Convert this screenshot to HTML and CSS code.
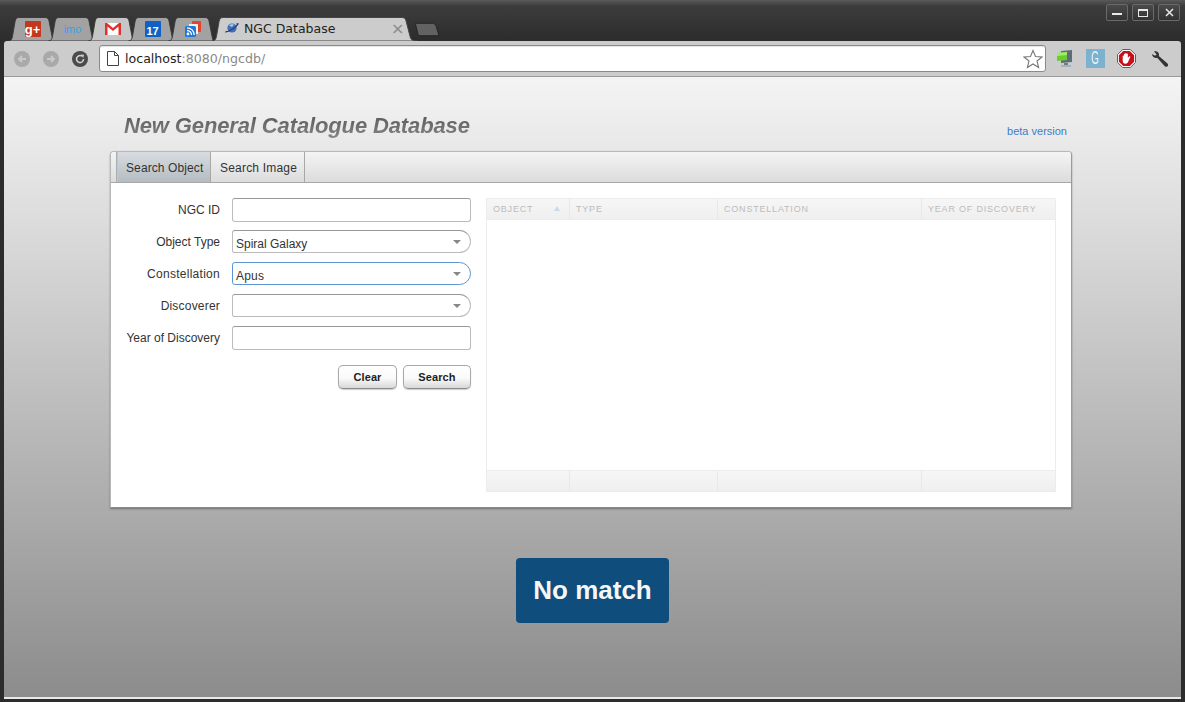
FILE: index.html
```html
<!DOCTYPE html>
<html lang="en">
<head>
<meta charset="utf-8">
<title>NGC Database</title>
<link rel="stylesheet" href="styles.css">
</head>
<body>
<div class="window">
  <header class="tabstrip">
    <div class="tabs">
      <div class="tab pinned">
        <svg class="tab-bg" viewBox="0 0 47 25" preserveAspectRatio="none"><path class="t-in" d="M0.500 25C3 25 4 23 4.500 20L7 5C7.500 2 8.500 0.500 11 0.500H37C39.500 0.500 40.500 2 41 4L44 20C44.500 23 45 25 46.500 25Z"/></svg>
        <span class="fav gplus">g+</span>
      </div>
      <div class="tab pinned">
        <svg class="tab-bg" viewBox="0 0 47 25" preserveAspectRatio="none"><path class="t-in" d="M0.500 25C3 25 4 23 4.500 20L7 5C7.500 2 8.500 0.500 11 0.500H37C39.500 0.500 40.500 2 41 4L44 20C44.500 23 45 25 46.500 25Z"/></svg>
        <span class="fav imo">imo</span>
      </div>
      <div class="tab pinned">
        <svg class="tab-bg" viewBox="0 0 47 25" preserveAspectRatio="none"><path class="t-glow" d="M0.500 25C3 25 4 23 4.500 20L7 5C7.500 2 8.500 0.500 11 0.500H37C39.500 0.500 40.500 2 41 4L44 20C44.500 23 45 25 46.500 25Z"/></svg>
        <svg class="fav-svg" viewBox="0 0 16 12"><rect width="16" height="12" fill="#fff"/><path d="M0 0H2L8 5L14 0H16V12H13.500V3.500L8 8L2.500 3.500V12H0Z" fill="#e0322c"/></svg>
      </div>
      <div class="tab pinned">
        <svg class="tab-bg" viewBox="0 0 47 25" preserveAspectRatio="none"><path class="t-in" d="M0.500 25C3 25 4 23 4.500 20L7 5C7.500 2 8.500 0.500 11 0.500H37C39.500 0.500 40.500 2 41 4L44 20C44.500 23 45 25 46.500 25Z"/></svg>
        <span class="fav cal">17</span>
      </div>
      <div class="tab pinned">
        <svg class="tab-bg" viewBox="0 0 47 25" preserveAspectRatio="none"><path class="t-in" d="M0.500 25C3 25 4 23 4.500 20L7 5C7.500 2 8.500 0.500 11 0.500H37C39.500 0.500 40.500 2 41 4L44 20C44.500 23 45 25 46.500 25Z"/></svg>
        <svg class="fav-svg reader" viewBox="0 0 16 16"><rect x="7" y="0" width="9" height="11" rx="1" fill="#e0432f"/><rect x="4" y="3" width="9" height="10" fill="#f3efe6"/><rect x="0" y="5" width="11" height="11" rx="1.500" fill="#1d78d6"/><circle cx="3" cy="13" r="1.400" fill="#fff"/><path d="M2 9.500A4.500 4.500 0 0 1 6.500 14M2 6.800A7.200 7.200 0 0 1 9.200 14" fill="none" stroke="#fff" stroke-width="1.300"/></svg>
      </div>
      <div class="tab active">
        <svg class="tab-bg" viewBox="0 0 205 25" preserveAspectRatio="none"><path class="t-ac" d="M0 25C3 25 4 23 4.500 20L7 5C7.500 2 8.500 0.500 11 0.500H190C192.500 0.500 193.500 2 194 4L198 20C198.500 23 200 25 205 25Z"/></svg>
        <svg class="planet" viewBox="0 0 16 14"><circle cx="8" cy="7" r="4.600" fill="#3f6fb8"/><path d="M5 4.500A4 4 0 0 1 10 3.500L8 6Z" fill="#a9c4ec"/><path d="M1 11.500C4 12 13 7 15 2.500C13 2 12.300 2.300 12 2.800C13 3 13 3.500 11 5.500C8 8 4 10 2.500 10C1.500 10 1 11 1 11.500Z" fill="#1f3f7a"/></svg>
        <span class="tab-title">NGC Database</span>
        <span class="tab-close">×</span>
      </div>
      <svg class="newtab" viewBox="0 0 26 15"><path d="M1 1H18C20 1 21 2 22 4L25 14H5C4 14 3.500 13.500 3 12L0.500 2C0.300 1.300 0.500 1 1 1Z" fill="#626262" stroke="#232323"/></svg>
    </div>
    <div class="winbtns">
      <button class="winbtn"><span class="w-min"></span></button>
      <button class="winbtn"><span class="w-max"></span></button>
      <button class="winbtn"><svg class="w-x" viewBox="0 0 9 9"><path d="M1 1L8 8M8 1L1 8" stroke="#e8e8e8" stroke-width="1.500" fill="none"/></svg></button>
    </div>
  </header>

  <nav class="toolbar">
    <svg class="navbtn" viewBox="0 0 16 16"><circle cx="8" cy="8" r="8" fill="#a9a9a9"/><path d="M12 8H5M8 5L5 8L8 11" stroke="#c9c9c9" stroke-width="1.800" fill="none"/></svg>
    <svg class="navbtn" viewBox="0 0 16 16"><circle cx="8" cy="8" r="8" fill="#a9a9a9"/><path d="M4 8H11M8 5L11 8L8 11" stroke="#c9c9c9" stroke-width="1.800" fill="none"/></svg>
    <svg class="navbtn" viewBox="0 0 16 16"><circle cx="8" cy="8" r="8" fill="#4a4a4a"/><path d="M11.500 8A3.500 3.500 0 1 1 10 5.200" stroke="#d0d0d0" stroke-width="1.600" fill="none"/><path d="M8.800 3.500L12 3.800L11.300 7Z" fill="#d0d0d0"/></svg>
    <div class="omnibox">
      <svg class="pageicon" viewBox="0 0 12 15"><path d="M0.500 0.500H7.500L11.500 4.500V14.500H0.500Z" fill="#fff" stroke="#444"/><path d="M7.500 0.500V4.500H11.500" fill="none" stroke="#444"/></svg>
      <span class="url"><span class="host">localhost</span>:8080/ngcdb/</span>
      <svg class="star" viewBox="0 0 20 20"><path d="M10 1.500L12.500 7.500L19 8L14 12L15.600 18.500L10 15L4.400 18.500L6 12L1 8L7.500 7.500Z" fill="#fff" stroke="#777" stroke-width="1.100"/></svg>
    </div>
    <div class="exts">
      <svg class="ext" viewBox="0 0 17 19"><path d="M5 2L16 1V13L5 14Z" fill="#5d6d78"/><path d="M1 4L11 3V11L1 12Z" fill="#68cf28"/><path d="M1 4L11 3V6L1 7Z" fill="#a4ea6c"/><rect x="8" y="14" width="4" height="2" fill="#6f7f8a"/><rect x="5" y="16" width="10" height="2" fill="#a4b1b9"/></svg>
      <span class="ext gee"><span class="gee-letter">G</span></span>
      <svg class="ext" viewBox="0 0 20 20"><path d="M6 0.500H14L19.500 6V14L14 19.500H6L0.500 14V6Z" fill="#fff" stroke="#555"/><path d="M6.500 2H13.500L18 6.500V13.500L13.500 18H6.500L2 13.500V6.500Z" fill="#c8101a"/><path d="M6 12V7.500C6 6.700 7.300 6.700 7.300 7.500V5.500C7.300 4.700 8.600 4.700 8.600 5.500V4.800C8.600 4 10 4 10 4.800V5.300C10 4.500 11.400 4.500 11.400 5.300V9.500L12.700 8C13.400 7.400 14.300 8 13.800 8.800L12 13C11.500 14.600 10.500 15.500 9 15.500C7 15.500 6 14.300 6 12Z" fill="#fff"/></svg>
      <svg class="ext wrench" viewBox="0 0 18 18"><path d="M3 1.500C5.500 0.500 8 2 8 4.500C8 5 8 5.500 7.800 6L16.500 13.500C17.300 14.300 17.300 15.500 16.500 16.300C15.700 17.100 14.500 17 13.800 16.300L6.200 7.800C4 8.500 1.200 7 1 4L4 5.800L5.700 4.500Z" fill="#333"/></svg>
    </div>
  </nav>

  <main class="page">
    <div class="app">
      <div class="app-head">
        <h1 class="app-title">New General Catalogue Database</h1>
        <a class="beta">beta version</a>
      </div>
      <section class="card">
        <div class="card-tabs">
          <div class="card-tab selected">Search Object</div>
          <div class="card-tab second">Search Image</div>
        </div>
        <div class="card-body">
          <form class="form">
            <div class="row row-input"><label>NGC ID</label><span class="field"></span></div>
            <div class="row row-select"><label>Object Type</label><span class="field combo">Spiral Galaxy<i class="caret"></i></span></div>
            <div class="row row-select"><label class="wide">Constellation</label><span class="field combo focus">Apus<i class="caret"></i></span></div>
            <div class="row row-select"><label class="mid">Discoverer</label><span class="field combo"><i class="caret"></i></span></div>
            <div class="row row-input"><label>Year of Discovery</label><span class="field"></span></div>
            <div class="actions">
              <span class="btn btn-clear">Clear</span>
              <span class="btn btn-search">Search</span>
            </div>
          </form>
          <div class="grid">
            <div class="grid-row grid-head">
              <div class="cell c1">OBJECT<i class="sort"></i></div>
              <div class="cell c2">TYPE</div>
              <div class="cell c3">CONSTELLATION</div>
              <div class="cell c4">YEAR OF DISCOVERY</div>
            </div>
            <div class="grid-empty"></div>
            <div class="grid-row grid-foot">
              <div class="cell c1"></div>
              <div class="cell c2"></div>
              <div class="cell c3"></div>
              <div class="cell c4"></div>
            </div>
          </div>
        </div>
      </section>
      <div class="notice-wrap"><div class="notice">No match</div></div>
    </div>
  </main>
</div>
</body>
</html>
```

FILE: styles.css
```css
* { box-sizing: border-box; }
html, body { margin: 0; height: 100%; overflow: hidden; }
body { font-family: "Liberation Sans", Arial, sans-serif; background: #2c2c2c; }

.window { height: 702px; display: flex; flex-direction: column; background: linear-gradient(#5a5a5a 0, #3c3c3c 6px, #2c2c2c 41px); }

/* Tab strip */
.tabstrip { height: 41px; display: flex; justify-content: space-between; padding: 4px 5px 0 8px; flex: none; }
.tabs { display: flex; align-items: flex-end; height: 37px; }
.tab { position: relative; height: 24px; display: flex; align-items: center; flex: none; }
.pinned { width: 47px; margin-right: -7px; justify-content: center; padding-left: 2px; }
.active { width: 205px; margin-left: 4px; padding: 0 0 2px 12px; }
.tab-bg { position: absolute; left: 0; top: 0; width: 100%; height: 100%; }
.t-in { fill: #a2a2a2; stroke: #3a3a3a; }
.t-glow { fill: #c6c6c6; stroke: #3a3a3a; }
.t-ac { fill: #cccccc; stroke: #444; }
.fav, .fav-svg, .planet, .tab-title, .tab-close { position: relative; }
.fav { width: 16px; height: 16px; display: flex; align-items: center; justify-content: center; }
.fav-svg { width: 16px; height: 12px; }
.fav-svg.reader { height: 16px; }
.gplus { background: #c4371f; color: #fff; font: bold 13px "Liberation Sans", sans-serif; border-radius: 1px; }
.imo { color: #3b9fe8; font: 11px "Liberation Sans", sans-serif; }
.cal { background: #0f62c4; color: #fff; font: bold 11px "Liberation Sans", sans-serif; padding-top: 3px; border-radius: 1px; }
.planet { width: 16px; height: 14px; flex: none; }
.tab-title { font: 12.500px "DejaVu Sans", sans-serif; color: #222; margin-left: 4px; }
.tab-close { position: absolute; left: 179px; color: #8a8a8a; font: 16px "DejaVu Sans", sans-serif; line-height: 23px; top: 0; }
.newtab { width: 25px; height: 15px; flex: none; margin-left: -2px; margin-bottom: 4px; }

.winbtns { display: flex; gap: 4px; height: 17px; }
.winbtn { width: 22px; height: 17px; padding: 0; border: 1px solid #6a6a6a; border-radius: 2px; background: linear-gradient(#4a4a4a, #333); display: flex; align-items: center; justify-content: center; }
.w-min { width: 10px; height: 2px; background: #e8e8e8; margin-top: 3px; }
.w-max { width: 10px; height: 8px; border: 1px solid #e8e8e8; border-top-width: 2px; }
.w-x { width: 9px; height: 9px; }

/* Toolbar */
.toolbar { height: 36px; margin: 0 4px 0 4px; background: #cccccc; border-radius: 3px 3px 0 0; flex: none; display: flex; align-items: center; padding: 0 0 0 10px; border-bottom: 1px solid #9a9a9a; }
.navbtn { width: 16px; height: 16px; margin-right: 13px; flex: none; }
.omnibox { width: 947px; height: 27px; margin-left: -2px; background: #fff; border: 1px solid #8a8a8a; border-radius: 3px; display: flex; align-items: center; padding: 0 2px 0 7px; box-shadow: inset 0 1px 1px #e4e4e4; }
.pageicon { width: 12px; height: 15px; flex: none; }
.url { font: 12.600px "DejaVu Sans", sans-serif; color: #888; margin-left: 6px; flex: 1; }
.host { color: #222; }
.star { width: 20px; height: 20px; flex: none; }
.exts { display: flex; align-items: center; gap: 12px; margin-left: 9px; }
.ext { width: 19px; height: 19px; flex: none; }
.wrench { margin-left: 3px; width: 18px; height: 18px; }
.gee { background: #7bb2cf; display: flex; align-items: center; justify-content: center; overflow: hidden; }
.gee-letter { color: #f2f6f8; font: 18px "Liberation Sans", sans-serif; transform: scaleX(0.55); }

/* Page */
.page { flex: 1; margin: 0 4px 3px; background: linear-gradient(#f4f4f4, #8c8c8c); border-bottom: 2px solid #e8e8e8; min-height: 0; }
.app { width: 962px; margin-left: 106px; }
.app-head { height: 74px; display: flex; justify-content: space-between; align-items: flex-end; padding: 0 5px 12px 14px; }
.app-title { margin: 0; font: italic bold 22px/26px "Liberation Sans", sans-serif; letter-spacing: -0.130px; background: linear-gradient(#555, #888); -webkit-background-clip: text; background-clip: text; color: transparent; }
.beta { font-size: 11px; line-height: 14px; color: #3d7cc9; margin-bottom: 1px; }

.card { height: 357px; border: 1px solid #b8b8b8; border-bottom-color: #8a8a8a; border-right-color: #9a9a9a; border-radius: 4px 4px 0 0; background: #fff; box-shadow: 0 1px 2px rgba(0,0,0,.35); display: flex; flex-direction: column; }
.card-tabs { height: 31px; flex: none; display: flex; padding-left: 5px; border-bottom: 1px solid #a8a8a8; border-radius: 3px 3px 0 0; background: linear-gradient(#f4f4f4, #dcdcdc); }
.card-tab { font-size: 12px; color: #333; line-height: 32px; padding: 0 0 0 9px; border-right: 1px solid #a8a8a8; }
.card-tab.selected { width: 95px; letter-spacing: 0.1px; background: linear-gradient(#d8dce0, #b4bcc2); border-left: 1px solid #a8b0b6; box-shadow: inset 1px 0 0 #c0c6ca; }
.card-tab.second { width: 94px; letter-spacing: 0.2px; }
.card-body { flex: 1; display: flex; padding: 15px 15px 15px 0; }

.form { width: 360px; margin-right: 15px; flex: none; }
.row { display: flex; align-items: center; height: 24px; margin-bottom: 8px; }
.row label { width: 109px; text-align: right; font-size: 12px; color: #333; margin-right: 12px; flex: none; }
.row label.wide { letter-spacing: 0.270px; }
.row label.mid { letter-spacing: 0.200px; }
.field { width: 239px; height: 24px; border: 1px solid #bcbcbc; border-top-color: #999; border-radius: 3px; background: #fff; display: block; position: relative; }
.combo { height: 23px; border-radius: 3px 12px 12px 3px; font-size: 12px; color: #333; line-height: 27px; padding-left: 3px; }
.row-select .field { margin-bottom: 1px; }
.focus { border-color: #5b96d2; letter-spacing: 0.200px; }
.caret { position: absolute; right: 9px; top: 9px; border: 4px solid transparent; border-top: 4px solid #888; border-bottom: 0; border-left-width: 4.500px; border-right-width: 4.500px; }
.actions { display: flex; justify-content: flex-end; gap: 6px; margin-top: 15px; width: 360px; }
.btn { height: 24px; border: 1px solid #a8a8a8; border-bottom-color: #8a8a8a; border-radius: 5px; background: linear-gradient(#fff, #fafafa 55%, #d8d8d8); box-shadow: 0 1px 1px rgba(0,0,0,.2); font: bold 11px/22px "Liberation Sans", sans-serif; color: #222; text-align: center; letter-spacing: 0.1px; }
.btn-clear { width: 59px; }
.btn-search { width: 68px; }

.grid { width: 570px; height: 294px; border: 1px solid #ececec; display: flex; flex-direction: column; flex: none; }
.grid-row { display: flex; flex: none; background: linear-gradient(#f6f6f6, #efefef); }
.grid-head { border-bottom: 1px solid #ececec; height: 21px; }
.grid-foot { border-top: 1px solid #ececec; height: 21px; }
.grid-empty { flex: 1; }
.cell { font-size: 9px; letter-spacing: 0.8px; color: #bcbcbc; line-height: 20px; padding-left: 6px; border-right: 1px solid #e8e8e8; position: relative; }
.c1 { width: 83px; }
.c2 { width: 148px; }
.c3 { width: 204px; }
.c4 { flex: 1; border-right: 0; }
.sort { position: absolute; right: 9px; top: 7px; border: 3px solid transparent; border-bottom: 5px solid #cfd8e8; border-top: 0; }

.notice-wrap { display: flex; justify-content: center; margin-top: 50px; padding-left: 3px; }
.notice { width: 153px; height: 65px; background: #0f4d7d; border-radius: 4px; color: #f6f6f6; font-size: 26px; font-weight: bold; text-align: center; line-height: 64px; }
```
